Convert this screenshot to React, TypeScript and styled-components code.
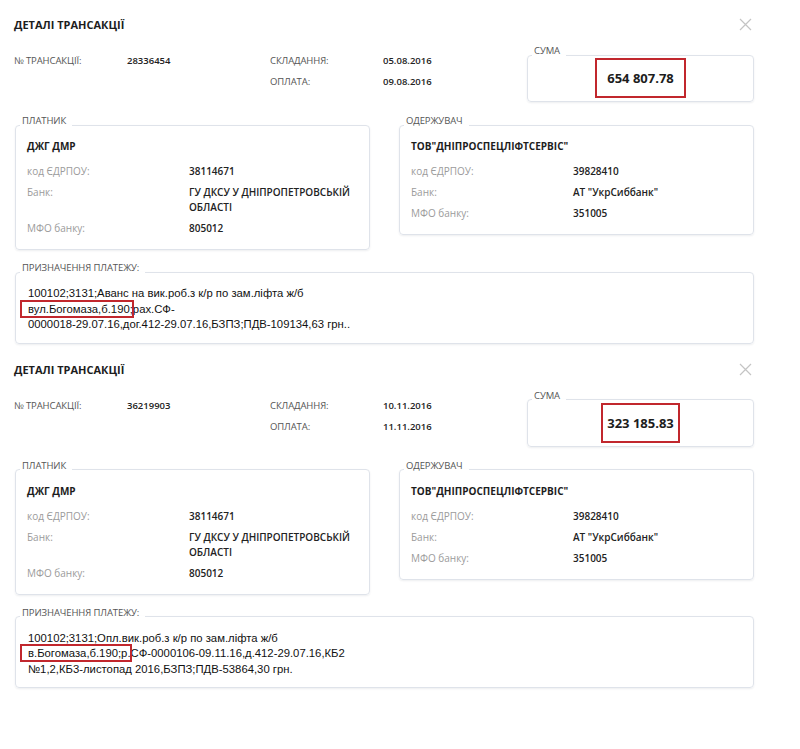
import styled, { createGlobalStyle } from "styled-components";

type Party = {
  role: string;
  name: string;
  code: string;
  bank: string[];
  mfo: string;
};

type Transaction = {
  id: string;
  created: string;
  paid: string;
  amount: string;
  amountPad: string;
  // purpose comes as fixed lines; the marked part opens the second one
  purpose: { first: string; marked: string; rest: string; last: string };
  payer: Party;
  payee: Party;
};

const payer: Party = {
  role: "ПЛАТНИК",
  name: "ДЖГ ДМР",
  code: "38114671",
  bank: ["ГУ ДКСУ У ДНІПРОПЕТРОВСЬКІЙ", "ОБЛАСТІ"],
  mfo: "805012",
};

const payee: Party = {
  role: "ОДЕРЖУВАЧ",
  name: 'ТОВ"ДНІПРОСПЕЦЛІФТСЕРВІС"',
  code: "39828410",
  bank: ['АТ "УкрСиббанк"'],
  mfo: "351005",
};

const transactions: Transaction[] = [
  {
    id: "28336454",
    created: "05.08.2016",
    paid: "09.08.2016",
    amount: "654 807.78",
    amountPad: "10px 10px",
    purpose: {
      first: "100102;3131;Аванс на вик.роб.з к/р по зам.ліфта ж/б",
      marked: "вул.Богомаза,б.190;",
      rest: "рах.СФ-",
      last: "0000018-29.07.16,дог.412-29.07.16,БЗПЗ;ПДВ-109134,63 грн..",
    },
    payer,
    payee,
  },
  {
    id: "36219903",
    created: "10.11.2016",
    paid: "11.11.2016",
    amount: "323 185.83",
    amountPad: "10px 4px",
    purpose: {
      first: "100102;3131;Опл.вик.роб.з к/р по зам.ліфта ж/б",
      marked: "в.Богомаза,б.190;р.",
      rest: "СФ-0000106-09.11.16,д.412-29.07.16,КБ2",
      last: "№1,2,КБ3-листопад 2016,БЗПЗ;ПДВ-53864,30 грн.",
    },
    payer,
    payee,
  },
];

function CloseIcon() {
  return (
    <svg width="13" height="13" viewBox="0 0 13 13">
      <path d="M1 1 L12 12 M12 1 L1 12" stroke="#c4c4c4" strokeWidth="1.2" fill="none" />
    </svg>
  );
}

function PartyCard({ party }: { party: Party }) {
  return (
    <Box>
      <Legend>{party.role}</Legend>
      <PartyBody>
        <PartyName>{party.name}</PartyName>
        <DetailRow>
          <DetailLabel>код ЄДРПОУ:</DetailLabel>
          <DetailValue>{party.code}</DetailValue>
        </DetailRow>
        <DetailRow>
          <DetailLabel>Банк:</DetailLabel>
          <DetailValue>
            {party.bank.map((line) => (
              <div key={line}>{line}</div>
            ))}
          </DetailValue>
        </DetailRow>
        <DetailRow>
          <DetailLabel>МФО банку:</DetailLabel>
          <DetailValue>{party.mfo}</DetailValue>
        </DetailRow>
      </PartyBody>
    </Box>
  );
}

function TransactionDetails({ tx }: { tx: Transaction }) {
  return (
    <Block>
      <Header>
        <Title>ДЕТАЛІ ТРАНСАКЦІЇ</Title>
        <CloseButton>
          <CloseIcon />
        </CloseButton>
      </Header>

      <InfoRow>
        <InfoGrid>
          <InfoLabel>№ ТРАНСАКЦІЇ:</InfoLabel>
          <InfoValue>{tx.id}</InfoValue>
          <InfoLabel>СКЛАДАННЯ:</InfoLabel>
          <InfoValue>{tx.created}</InfoValue>
          <span />
          <span />
          <InfoLabel>ОПЛАТА:</InfoLabel>
          <InfoValue>{tx.paid}</InfoValue>
        </InfoGrid>
        <SumBox>
          <Legend>СУМА</Legend>
          <SumBody>
            <Amount $pad={tx.amountPad}>{tx.amount}</Amount>
          </SumBody>
        </SumBox>
      </InfoRow>

      <Parties>
        <PartyCard party={tx.payer} />
        <PartyCard party={tx.payee} />
      </Parties>

      <PurposeBox>
        <Legend>ПРИЗНАЧЕННЯ ПЛАТЕЖУ:</Legend>
        <PurposeText>
          <PurposeLine>{tx.purpose.first}</PurposeLine>
          <PurposeLine>
            <Marked>{tx.purpose.marked}</Marked>
            {tx.purpose.rest}
          </PurposeLine>
          <PurposeLine>{tx.purpose.last}</PurposeLine>
        </PurposeText>
      </PurposeBox>
    </Block>
  );
}

export default function App() {
  return (
    <>
      <GlobalStyle />
      <Page>
        {transactions.map((tx) => (
          <TransactionDetails key={tx.id} tx={tx} />
        ))}
      </Page>
    </>
  );
}

const GlobalStyle = createGlobalStyle`
  html, body {
    margin: 0;
    padding: 0;
    background: #ffffff;
  }
  body {
    font-family: "Open Sans", "Noto Sans", Arial, sans-serif;
    color: #222;
  }
`;

const Page = styled.div`
  width: 740px;
  padding: 15px 0 40px 14px;
  display: flex;
  flex-direction: column;
  gap: 16px;
`;

const Block = styled.section`
  display: flex;
  flex-direction: column;
`;

const Header = styled.div`
  display: flex;
  align-items: center;
  justify-content: space-between;
  height: 20px;
`;

const Title = styled.h2`
  margin: 0;
  font-size: 11px;
  font-weight: 700;
  color: #1d1d1d;
  line-height: 20px;
`;

const CloseButton = styled.span`
  display: flex;
  margin-right: 2px;
  margin-top: -1px;
`;

const InfoRow = styled.div`
  display: flex;
  align-items: flex-start;
  justify-content: space-between;
  margin-top: 9px;
`;

const InfoGrid = styled.div`
  display: grid;
  grid-template-columns: 113px 143px 113px 100px;
  grid-auto-rows: 21px;
  align-items: center;
  margin-top: 6px;
`;

const InfoLabel = styled.span`
  font-size: 9.5px;
  color: #555;
  letter-spacing: -0.1px;
`;

const InfoValue = styled.span`
  font-size: 9.5px;
  font-weight: 600;
  color: #222;
`;

const Box = styled.fieldset`
  margin: 0;
  padding: 0;
  min-width: 0;
  border: 1px solid #dfe3ea;
  border-radius: 4px;
  box-shadow: 0 1px 2px rgba(30, 40, 60, 0.08);
  background: #fff;
`;

const Legend = styled.legend`
  margin-left: 4px;
  padding: 0 6px 8px 2px;
  font-size: 9.5px;
  line-height: 14px;
  color: #555;
  letter-spacing: -0.1px;
`;

const SumBox = styled(Box)`
  width: 227px;
  box-sizing: border-box;
  margin-left: 3px;
`;

const SumBody = styled.div`
  height: 46px;
  display: flex;
  align-items: center;
  justify-content: center;
  margin-top: -11px;
`;

const Amount = styled.span<{ $pad: string }>`
  font-size: 13px;
  font-weight: 700;
  color: #1d1d1d;
  padding: ${({ $pad }) => $pad};
  border: 2px solid #c1272d;
  line-height: 16px;
`;

const Parties = styled.div`
  display: grid;
  grid-template-columns: 355px 355px;
  justify-content: space-between;
  align-items: start;
  margin-top: 12px;
  margin-left: 1px;
`;

const PartyBody = styled.div`
  padding: 3px 11px 13px;
  display: flex;
  flex-direction: column;
  gap: 6px;
`;

const PartyName = styled.div`
  font-size: 10px;
  font-weight: 700;
  line-height: 15px;
  color: #1d1d1d;
  margin-bottom: 4px;
`;

const DetailRow = styled.div`
  display: grid;
  grid-template-columns: 162px 1fr;
  line-height: 15px;
`;

const DetailLabel = styled.span`
  font-size: 10px;
  color: #9b9b9b;
`;

const DetailValue = styled.span`
  font-size: 10px;
  font-weight: 600;
  color: #222;
`;

const PurposeBox = styled(Box)`
  margin-top: 11px;
  margin-left: 1px;
`;

const PurposeText = styled.div`
  padding: 3px 12px 10px;
  font-family: "Liberation Sans", Arial, sans-serif;
  font-size: 11.3px;
  line-height: 15.5px;
  color: #111;
`;

const PurposeLine = styled.div`
  white-space: nowrap;
`;

const Marked = styled.span`
  position: relative;

  &::before {
    content: "";
    position: absolute;
    left: -8px;
    right: -1px;
    top: -3px;
    bottom: -3px;
    border: 2px solid #c1272d;
  }
`;
